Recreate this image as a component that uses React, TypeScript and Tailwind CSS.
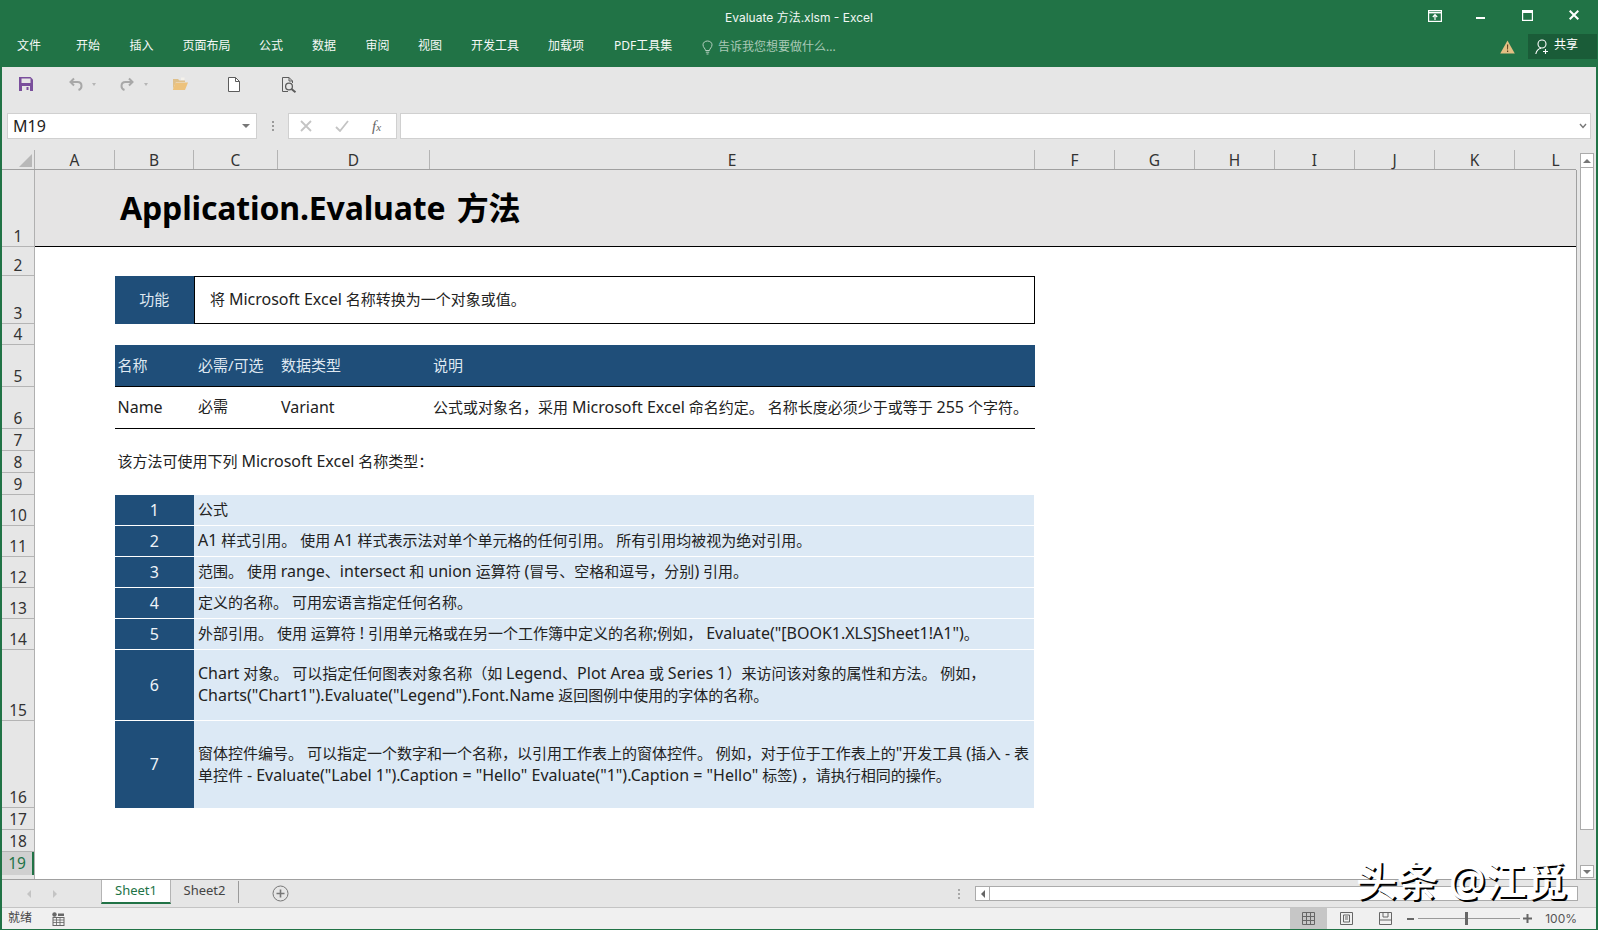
import React from "react";

const ff = "font-['Noto_Sans','Noto_Sans_CJK_SC',sans-serif]";
const inter = "font-['Inter','Noto_Sans_CJK_SC',sans-serif]";

const menu: [string, string][] = [
  ["文件", "w-[59px]"],
  ["开始", "w-[53.5px]"],
  ["插入", "w-[53px]"],
  ["页面布局", "w-[76.5px]"],
  ["公式", "w-[53px]"],
  ["数据", "w-[53.5px]"],
  ["审阅", "w-[52.5px]"],
  ["视图", "w-[53px]"],
  ["开发工具", "w-[77px]"],
  ["加载项", "w-[66px]"],
  ["PDF工具集", "w-[87px]"],
];

const columns: [string, string][] = [
  ["A", "w-[80px]"],
  ["B", "w-[79px]"],
  ["C", "w-[84px]"],
  ["D", "w-[152px]"],
  ["E", "w-[605px]"],
  ["F", "w-[80px]"],
  ["G", "w-[80px]"],
  ["H", "w-[80px]"],
  ["I", "w-[80px]"],
  ["J", "w-[80px]"],
  ["K", "w-[80px]"],
];

const rowHeaders: [number, string][] = [
  [1, "h-[77px]"],
  [2, "h-[29px]"],
  [3, "h-[48px]"],
  [4, "h-[21px]"],
  [5, "h-[42px]"],
  [6, "h-[42px]"],
  [7, "h-[22px]"],
  [8, "h-[22px]"],
  [9, "h-[22px]"],
  [10, "h-[31px]"],
  [11, "h-[31px]"],
  [12, "h-[31px]"],
  [13, "h-[31px]"],
  [14, "h-[31px]"],
  [15, "h-[71px]"],
  [16, "h-[87px]"],
  [17, "h-[22px]"],
  [18, "h-[22px]"],
];

const items: { n: number; h: string; lines: string[] }[] = [
  { n: 1, h: "h-[31px]", lines: ["公式"] },
  { n: 2, h: "h-[31px]", lines: ["A1 样式引用。 使用 A1 样式表示法对单个单元格的任何引用。 所有引用均被视为绝对引用。"] },
  { n: 3, h: "h-[31px]", lines: ["范围。 使用 range、intersect 和 union 运算符 (冒号、空格和逗号，分别) 引用。"] },
  { n: 4, h: "h-[31px]", lines: ["定义的名称。 可用宏语言指定任何名称。"] },
  { n: 5, h: "h-[31px]", lines: ["外部引用。 使用 运算符 ! 引用单元格或在另一个工作簿中定义的名称;例如， Evaluate(\"[BOOK1.XLS]Sheet1!A1\")。"] },
  {
    n: 6,
    h: "h-[71px]",
    lines: [
      "Chart 对象。 可以指定任何图表对象名称（如 Legend、Plot Area 或 Series 1）来访问该对象的属性和方法。 例如，",
      "Charts(\"Chart1\").Evaluate(\"Legend\").Font.Name 返回图例中使用的字体的名称。",
    ],
  },
  {
    n: 7,
    h: "h-[87px]",
    lines: [
      "窗体控件编号。 可以指定一个数字和一个名称，以引用工作表上的窗体控件。 例如，对于位于工作表上的\"开发工具 (插入 - 表",
      "单控件 - Evaluate(\"Label 1\").Caption = \"Hello\" Evaluate(\"1\").Caption = \"Hello\" 标签) ，请执行相同的操作。",
    ],
  },
];

// Latin runs sit one pixel larger than the CJK around them, as in the sheet's font.
function T({ s }: { s: string }) {
  return (
    <>
      {s.split(/([\u0021-\u007e][\u0020-\u007e]*[\u0021-\u007e]|[\u0021-\u007e])/).map((part, i) =>
        i % 2 === 1 ? (
          <span key={i} className="text-[16px]">
            {part}
          </span>
        ) : (
          <React.Fragment key={i}>{part}</React.Fragment>
        ),
      )}
    </>
  );
}

function TitleBar() {
  return (
    <div className="h-[67px] bg-[#217346] text-white flex flex-col shrink-0">
      <div className="h-[34px] flex">
        <div className="flex-1" />
        <div className={`${inter} text-[12px] leading-[36px] text-[#f2f7f4]`}>Evaluate 方法.xlsm - Excel</div>
        <div className="flex-1 flex justify-end items-start">
          <svg className="mt-[10px] mr-[34px]" width="14" height="12" viewBox="0 0 14 12" fill="none" stroke="#fff" strokeWidth="1.2">
            <rect x="0.6" y="0.6" width="12.8" height="10.8" />
            <path d="M0.6 2.6H13.4" strokeWidth="1.6" />
            <path d="M7 10V5M4.8 7L7 4.6L9.2 7" />
          </svg>
          <div className="mt-[17px] mr-[37px] w-[9px] h-[2px] bg-white" />
          <svg className="mt-[10px] mr-[36px]" width="11" height="11" viewBox="0 0 11 11" fill="none" stroke="#fff" strokeWidth="1.2">
            <rect x="0.6" y="0.6" width="9.8" height="9.8" />
            <path d="M0.6 2H10.4" strokeWidth="2" />
          </svg>
          <svg className="mt-[10px] mr-[19px]" width="10" height="10" viewBox="0 0 10 10" fill="none" stroke="#fff" strokeWidth="2">
            <path d="M0.7 0.7L9.3 9.3M9.3 0.7L0.7 9.3" />
          </svg>
        </div>
      </div>
      <div className="h-[33px] flex items-start pl-[17px]">
        {menu.map(([t, w]) => (
          <div key={t} className={`${w} shrink-0 text-[12px] leading-[24px] text-[#f6f9f7]`}>
            {t}
          </div>
        ))}
        <svg className="mt-[6px] ml-[1px] mr-[5px]" width="11" height="15" viewBox="0 0 11 15" fill="none" stroke="#b5d0c0" strokeWidth="1">
          <path d="M3.5 10.5C3.5 8.5 1 7.6 1 4.8C1 2.6 3 1 5.5 1C8 1 10 2.6 10 4.8C10 7.6 7.5 8.5 7.5 10.5Z" />
          <path d="M3.8 12.2H7.2M4.5 14H6.5" />
        </svg>
        <div className="text-[12px] leading-[25px] text-[#a9c9b6]">告诉我您想要做什么...</div>
        <div className="flex-1" />
        <svg className="mt-[6px] mr-[13px]" width="15" height="14" viewBox="0 0 15 14">
          <path d="M7.5 0.5L14.8 13.5H0.2Z" fill="#e3bf83" />
          <path d="M7 4.5H8.2L8 9.5H7.2ZM7 10.5H8.2V12H7Z" fill="#5a3e1a" />
        </svg>
        <div className="w-[69px] h-[25px] mr-[1px] bg-[#1a5c38] flex items-center pl-[7px] gap-[4px]">
          <svg width="15" height="16" viewBox="0 0 15 16" fill="none" stroke="#fff" strokeWidth="1.1">
            <circle cx="7" cy="5" r="4" />
            <path d="M0.8 15C1.5 11.5 3.5 9.6 6 9.2M10.5 10V15M8 12.5H13" />
          </svg>
          <span className="text-[12px] leading-[20px] -mt-[3px]">共享</span>
        </div>
      </div>
    </div>
  );
}

function QuickBar() {
  return (
    <div className="h-[46px] flex items-start pt-[9px] shrink-0">
      <svg className="ml-[17px] mt-[1px]" width="14" height="14" viewBox="0 0 14 14">
        <path d="M0 0H11.5L14 2.5V14H0Z" fill="#7a4f9c" />
        <rect x="2.5" y="1.5" width="9" height="4.5" fill="#e6e6e6" />
        <rect x="3" y="9" width="8" height="5" fill="#e6e6e6" />
        <rect x="7.5" y="10" width="2" height="3" fill="#7a4f9c" />
      </svg>
      <svg className="ml-[36px] mt-[1px]" width="14" height="14" viewBox="0 0 14 14" fill="none" stroke="#a8a8a8" strokeWidth="2">
        <path d="M5 1.5L1.5 5L5 8.5M1.5 5H8.5C11 5 12.5 6.8 12.5 9C12.5 11 11 12.5 9.5 13" />
      </svg>
      <div className="ml-[9px] mt-[7px] w-0 h-0 border-x-[2.5px] border-x-transparent border-t-[3px] border-t-[#b5b5b5]" />
      <svg className="ml-[24px] mt-[1px]" width="14" height="14" viewBox="0 0 14 14" fill="none" stroke="#a8a8a8" strokeWidth="2">
        <path d="M9 1.5L12.5 5L9 8.5M12.5 5H5.5C3 5 1.5 6.8 1.5 9C1.5 11 3 12.5 4.5 13" />
      </svg>
      <div className="ml-[10px] mt-[7px] w-0 h-0 border-x-[2.5px] border-x-transparent border-t-[3px] border-t-[#b5b5b5]" />
      <svg className="ml-[24px] mt-[1px]" width="16" height="13" viewBox="0 0 16 13">
        <path d="M1 2H6L7.5 3.5H13V5H4L1 12Z" fill="#dfc08b" />
        <path d="M3.5 5.5H16L13 13H0.8Z" fill="#edc27c" />
        <path d="M9 0.5H12.5V3H9Z" fill="#f4f1ea" />
      </svg>
      <svg className="ml-[40px] mt-[1px]" width="12" height="15" viewBox="0 0 12 15" fill="#fff" stroke="#5c5c5c" strokeWidth="1">
        <path d="M0.5 0.5H7.5L11.5 4.5V14.5H0.5Z" />
        <path d="M7.5 0.5V4.5H11.5" fill="none" />
      </svg>
      <svg className="ml-[42px] mt-[1px]" width="15" height="16" viewBox="0 0 15 16" fill="none" stroke="#5c5c5c" strokeWidth="1">
        <path d="M6 14.5H0.5V0.5H7L10.5 4V6" />
        <path d="M7 0.5V4H10.5" />
        <circle cx="7" cy="9.5" r="3.4" strokeWidth="1.3" />
        <path d="M9.5 12L13.5 15.2" strokeWidth="2" />
      </svg>
    </div>
  );
}

function FormulaBar() {
  return (
    <div className="h-[26px] flex pl-[5px] pr-[3px] shrink-0">
      <div className="w-[250px] bg-white border border-[#d0d0d0] flex items-center justify-between pl-[5px] pr-[6px]">
        <span className="text-[16px] text-[#222]">M19</span>
        <div className="w-0 h-0 border-x-[4px] border-x-transparent border-t-[4px] border-t-[#777]" />
      </div>
      <div className="w-[31px] flex flex-col items-center justify-center gap-[2px]">
        <div className="w-[2px] h-[2px] bg-[#9a9a9a]" />
        <div className="w-[2px] h-[2px] bg-[#9a9a9a]" />
        <div className="w-[2px] h-[2px] bg-[#9a9a9a]" />
      </div>
      <div className="w-[109px] bg-white border border-[#d0d0d0] flex items-center pl-[11px]">
        <svg width="12" height="12" viewBox="0 0 12 12" fill="none" stroke="#c4c4c4" strokeWidth="1.8">
          <path d="M1 1L11 11M11 1L1 11" />
        </svg>
        <svg className="ml-[23px]" width="14" height="12" viewBox="0 0 14 12" fill="none" stroke="#c4c4c4" strokeWidth="1.8">
          <path d="M1 7L5 11L13 1" />
        </svg>
        <span className="ml-[23px] font-['Liberation_Serif',serif] italic text-[15px] text-[#666] leading-none">
          f<span className="text-[11px]">x</span>
        </span>
      </div>
      <div className="w-[1191px] ml-[3px] bg-white border border-[#d0d0d0] flex items-center justify-end pr-[3px]">
        <svg width="8" height="6" viewBox="0 0 8 6" fill="none" stroke="#777" strokeWidth="1.4">
          <path d="M1 1L4 4.5L7 1" />
        </svg>
      </div>
    </div>
  );
}

function ColumnHeader() {
  return (
    <div className="h-[31px] flex items-end shrink-0">
      <div className="h-[20px] flex items-stretch border-b border-[#a0a0a0]">
        <div className="w-[33px] border-r border-[#b0b0b0] relative">
          <div className="absolute right-[2px] bottom-[2px] w-0 h-0 border-l-[13px] border-l-transparent border-b-[13px] border-b-[#b8b8b8]" />
        </div>
        {columns.map(([c, w]) => (
          <div key={c} className={`${w} border-r border-[#b4b4b4] text-center text-[15.5px] leading-[20px] text-[#333]`}>
            {c}
          </div>
        ))}
        <div className="w-[61px] pl-[20px] text-center text-[15.5px] leading-[20px] text-[#333]">L</div>
      </div>
    </div>
  );
}

function RowHeaders() {
  return (
    <div className="w-[33px] shrink-0 flex flex-col bg-[#e6e6e6] border-r border-[#b0b0b0]">
      {rowHeaders.map(([n, h]) => (
        <div key={n} className={`${h} border-b border-[#b4b4b4] flex items-end justify-center text-[15.5px] leading-[20px] text-[#333]`}>
          {n}
        </div>
      ))}
      <div className="h-[23px] bg-[#d0d0d0] border-r-2 border-[#217346] flex items-end justify-center text-[15.5px] leading-[23px] text-[#217346]">
        19
      </div>
      <div className="flex-1" />
    </div>
  );
}

function Sheet() {
  return (
    <div className="flex-1 bg-white text-[15px] text-[#222] flex flex-col">
      <div className="h-[77px] bg-[#e5e4e4] border-b border-black flex items-center pl-[85px]">
        <span className="text-[32px] font-bold text-black leading-none tracking-[-0.15px] [word-spacing:3px]">Application.Evaluate 方法</span>
      </div>
      <div className="h-[29px]" />
      <div className="ml-[79.5px] w-[920.5px] h-[48px] flex">
        <div className="w-[79.5px] bg-[#1f4e79] text-[#dfe8f1] pb-[2px] flex items-center justify-center">功能</div>
        <div className="flex-1 border border-black flex items-center pl-[15px] pb-[2px]">
          <div><T s="将 Microsoft Excel 名称转换为一个对象或值。" /></div>
        </div>
      </div>
      <div className="h-[21px]" />
      <div className="ml-[79.5px] w-[920.5px] h-[42px] pb-[1px] bg-[#1f4e79] text-[#dfe8f1] border-b border-black flex items-center">
        <div className="w-[79.5px] pl-[3px]">名称</div>
        <div className="w-[84px] pl-[4px]">必需/可选</div>
        <div className="w-[152px] pl-[3px]">数据类型</div>
        <div className="pl-[3px]">说明</div>
      </div>
      <div className="ml-[79.5px] w-[920.5px] h-[42px] pb-[2px] border-b border-black flex items-center">
        <div className="w-[79.5px] pl-[3px]"><T s="Name" /></div>
        <div className="w-[84px] pl-[4px]">必需</div>
        <div className="w-[152px] pl-[3px]"><T s="Variant" /></div>
        <div className="pl-[3px] whitespace-nowrap">
          <T s="公式或对象名，采用 Microsoft Excel 命名约定。 名称长度必须少于或等于 255 个字符。" />
        </div>
      </div>
      <div className="h-[22px]" />
      <div className="ml-[79.5px] h-[22px] pl-[3px] leading-[20px]"><T s="该方法可使用下列 Microsoft Excel 名称类型：" /></div>
      <div className="h-[22px]" />
      <div className="ml-[79.5px] w-[919.5px] flex flex-col">
        {items.map((it) => (
          <div key={it.n} className={`${it.h} flex border-b border-white last:border-b-0`}>
            <div className="w-[79.5px] shrink-0 bg-[#1f4e79] text-[#eef3f8] text-[16px] pb-[1px] flex items-center justify-center">{it.n}</div>
            <div className="flex-1 bg-[#dce9f5] flex flex-col justify-center pl-[4px] pb-[2px] whitespace-nowrap">
              {it.lines.map((l) => (
                <div key={l} className="h-[22px] leading-[22px]"><T s={l} /></div>
              ))}
            </div>
          </div>
        ))}
      </div>
    </div>
  );
}

function VScroll() {
  return (
    <div className="w-[20px] shrink-0 pl-[3px] pr-[2px] flex flex-col bg-[#e6e6e6] border-l border-[#a0a0a0]">
      <div className="-mt-[17px] h-[15px] bg-white border border-[#ababab] flex items-center justify-center">
        <div className="w-0 h-0 border-x-[4px] border-x-transparent border-b-[4px] border-b-[#777]" />
      </div>
      <div className="h-[662px] bg-white border border-[#ababab] border-t-0" />
      <div className="flex-1" />
      <div className="h-[13px] mb-[1px] bg-white border border-[#ababab] flex items-center justify-center">
        <div className="w-0 h-0 border-x-[4px] border-x-transparent border-t-[4px] border-t-[#777]" />
      </div>
    </div>
  );
}

function TabBar() {
  return (
    <div className="h-[28px] shrink-0 bg-[#e6e6e6] border-t border-[#a0a0a0] flex items-start">
      <div className="w-[99px] h-full flex items-center pl-[25px] gap-[22px]">
        <div className="w-0 h-0 border-y-[4px] border-y-transparent border-r-[4px] border-r-[#c4c4c4]" />
        <div className="w-0 h-0 border-y-[4px] border-y-transparent border-l-[4px] border-l-[#c4c4c4]" />
      </div>
      <div className="w-[70px] h-[24px] bg-white border-x border-[#b4b4b4] border-b-2 border-b-[#217346] text-center text-[13px] leading-[20px] text-[#217346]">
        Sheet1
      </div>
      <div className="w-[68px] h-[22px] mt-[1px] border-r border-[#9a9a9a] text-center text-[13px] leading-[18px] text-[#444]">Sheet2</div>
      <svg className="ml-[33px] mt-[5px]" width="17" height="17" viewBox="0 0 17 17" fill="none" stroke="#777" strokeWidth="1">
        <circle cx="8.5" cy="8.5" r="7.5" />
        <path d="M8.5 4.5V12.5M4.5 8.5H12.5" strokeWidth="1.6" />
      </svg>
      <div className="flex-1" />
      <div className="h-full flex flex-col justify-center gap-[2px] mr-[15px]">
        <div className="w-[2px] h-[2px] bg-[#a8a8a8]" />
        <div className="w-[2px] h-[2px] bg-[#a8a8a8]" />
        <div className="w-[2px] h-[2px] bg-[#a8a8a8]" />
      </div>
      <div className="mt-[6px] h-[15px] w-[603px] mr-[18px] bg-white border border-[#ababab] flex">
        <div className="w-[14px] border-r border-[#ababab] flex items-center justify-center">
          <div className="w-0 h-0 border-y-[4px] border-y-transparent border-r-[4px] border-r-[#666]" />
        </div>
        <div className="flex-1" />
      </div>
    </div>
  );
}

function StatusBar() {
  return (
    <div className="h-[22px] shrink-0 bg-[#f0f0f0] border-t border-[#c4c4c4] flex items-center text-[12px] text-[#444]">
      <span className="ml-[6px] -mt-[2px]">就绪</span>
      <svg className="ml-[20px]" width="13" height="14" viewBox="0 0 13 14" fill="none" stroke="#666" strokeWidth="1">
        <circle cx="2.5" cy="2.5" r="2.2" fill="#666" stroke="none" />
        <rect x="1" y="5.5" width="11" height="8" />
        <path d="M1 8H12M1 10.5H12M4.5 5.5V13.5M8 5.5V13.5" strokeWidth="0.8" />
        <path d="M6 1.5H12V4H6Z" fill="#666" stroke="none" />
      </svg>
      <div className="flex-1" />
      <div className="w-[37px] h-full bg-[#c6c6c6] flex items-center justify-center">
        <svg width="13" height="13" viewBox="0 0 13 13" fill="none" stroke="#666" strokeWidth="1">
          <path d="M0.5 0.5H12.5V12.5H0.5ZM0.5 4.5H12.5M0.5 8.5H12.5M4.5 0.5V12.5M8.5 0.5V12.5" />
        </svg>
      </div>
      <svg className="ml-[13px]" width="13" height="13" viewBox="0 0 13 13" fill="none" stroke="#666" strokeWidth="1">
        <path d="M0.5 0.5H12.5V12.5H0.5ZM3.5 3H9.5V10H3.5ZM5 5H8M5 7H8" />
      </svg>
      <svg className="ml-[26px]" width="13" height="13" viewBox="0 0 13 13" fill="none" stroke="#666" strokeWidth="1">
        <path d="M0.5 0.5H12.5V12.5H0.5ZM0.5 8H12.5M4 0.5V5H9V0.5" />
      </svg>
      <div className="ml-[15px] w-[7px] h-[2px] bg-[#666]" />
      <div className="ml-[4px] w-[102px] h-[1px] bg-[#9a9a9a] relative">
        <div className="absolute left-[47px] -top-[6px] w-[3px] h-[13px] bg-[#666]" />
      </div>
      <svg className="ml-[3px]" width="9" height="9" viewBox="0 0 9 9" stroke="#666" strokeWidth="2">
        <path d="M4.5 0V9M0 4.5H9" />
      </svg>
      <span className={`${inter} ml-[13px] mr-[19px] text-[#555]`}>100%</span>
    </div>
  );
}

export default function App() {
  return (
    <div className={`${ff} relative w-[1598px] h-[930px] overflow-hidden flex flex-col bg-[#e6e6e6]`}>
      <TitleBar />
      <div className="flex-1 flex flex-col border-x-2 border-b border-[#217346] min-h-0">
        <QuickBar />
        <FormulaBar />
        <ColumnHeader />
        <div className="flex-1 flex min-h-0">
          <RowHeaders />
          <Sheet />
          <VScroll />
        </div>
        <TabBar />
        <StatusBar />
      </div>
      <div className="absolute left-[1356px] top-[856px] text-[41px] leading-[48px] whitespace-nowrap text-white font-medium [text-shadow:2px_2px_0_#000]">
        头条 @江觅
      </div>
    </div>
  );
}
